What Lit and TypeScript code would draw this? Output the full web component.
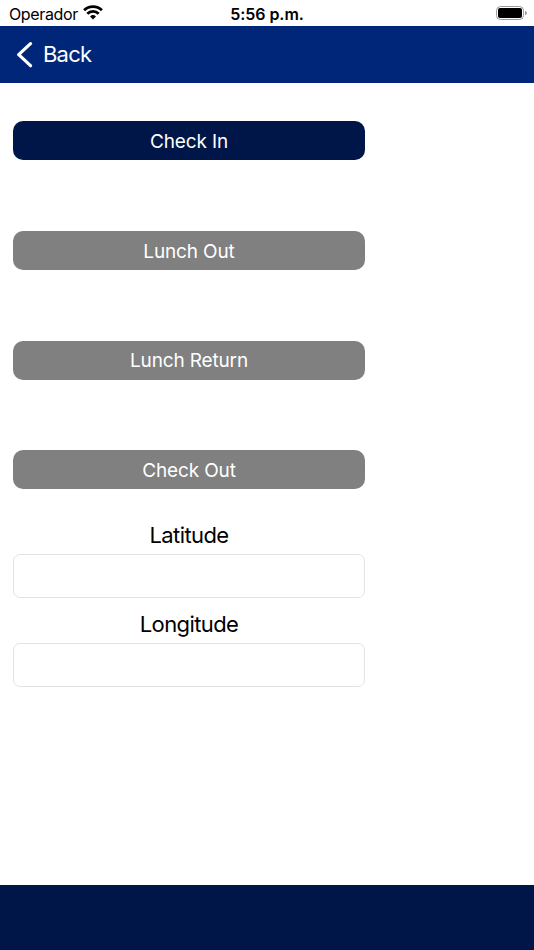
import { LitElement, html, css } from "lit";
import { customElement } from "lit/decorators.js";

@customElement("app-root")
export class AppRoot extends LitElement {
  static styles = css`
    :host { display: flex; flex-direction: column; height: 950px; background: #fff; font-family: Inter, "Liberation Sans", sans-serif; color: #000; overflow: hidden; }
    * { box-sizing: border-box; }
    .status { height: 26px; display: grid; grid-template-columns: 1fr auto 1fr; align-items: center; padding: 1px 7px 0 9px; font-size: 16px; line-height: 26px; }
    .carrier { display: flex; align-items: center; gap: 5.5px; letter-spacing: -0.36px; }
    .carrier svg { margin-top: -3px; }
    .time { font-weight: 600; margin-right: 2px; letter-spacing: -0.05px; }
    .battery { justify-self: end; margin-top: -2px; }
    svg { display: block; }
    .nav { height: 57px; background: #00267a; color: #fff; display: flex; align-items: center; padding-left: 16px; gap: 10px; font-size: 22px; letter-spacing: -0.8px; }
    .back { margin-top: -1px; }
    .content { flex: 1; width: 365px; padding: 38.4px 0 0 13px; }
    .btn { height: 39px; margin-bottom: 70.7px; border-radius: 10px; background: #808080; color: #fff; font-size: 19px; letter-spacing: -0.15px; display: flex; align-items: center; justify-content: center; padding-top: 1px; }
    .primary { background: #001648; }
    .last { margin-bottom: 30.6px; }
    .label { height: 30px; line-height: 30px; font-size: 22px; letter-spacing: -0.6px; text-align: center; margin-bottom: 4px; }
    .field { height: 44px; border: 1px solid #e3e3e3; border-radius: 7px; margin-bottom: 11.4px; }
    .footer { height: 65px; background: #001648; }
  `;
  render() {
    return html`
      <div class="status">
        <div class="carrier"><span>Operador</span>
          <svg width="20" height="15" viewBox="0 0 20 15" fill="none" stroke="#000" stroke-width="2.8"><path d="M1.1 5.3a12.7 12.7 0 0 1 17.8 0M4.3 8.7a8.2 8.2 0 0 1 11.4 0"/><path d="M10 14.5l-3-3a4.3 4.3 0 0 1 6 0z" fill="#000" stroke="none"/></svg>
        </div>
        <div class="time">5:56 p.m.</div>
        <svg class="battery" width="31" height="14" viewBox="0 0 31 14"><rect x=".5" y=".5" width="27" height="13" rx="4" fill="none" stroke="#999"/><rect x="2" y="2" width="24" height="10" rx="2"/><path d="M29 4.8q2 .7 2 2.2t-2 2.2z" fill="#999"/></svg>
      </div>
      <div class="nav"><svg width="17" height="26" viewBox="0 0 17 26" fill="none" stroke="#fff" stroke-width="3.2" stroke-linecap="round" stroke-linejoin="round"><path d="M14.5 1.7 2.7 12.7l11.8 11"/></svg><span class="back">Back</span></div>
      <div class="content">
        <div class="btn primary"><span>Check In</span></div>
        <div class="btn"><span>Lunch Out</span></div>
        <div class="btn"><span>Lunch Return</span></div>
        <div class="btn last"><span>Check Out</span></div>
        <div class="label"><span>Latitude</span></div>
        <div class="field"></div>
        <div class="label"><span>Longitude</span></div>
        <div class="field"></div>
      </div>
      <div class="footer"></div>`;
  }
}
